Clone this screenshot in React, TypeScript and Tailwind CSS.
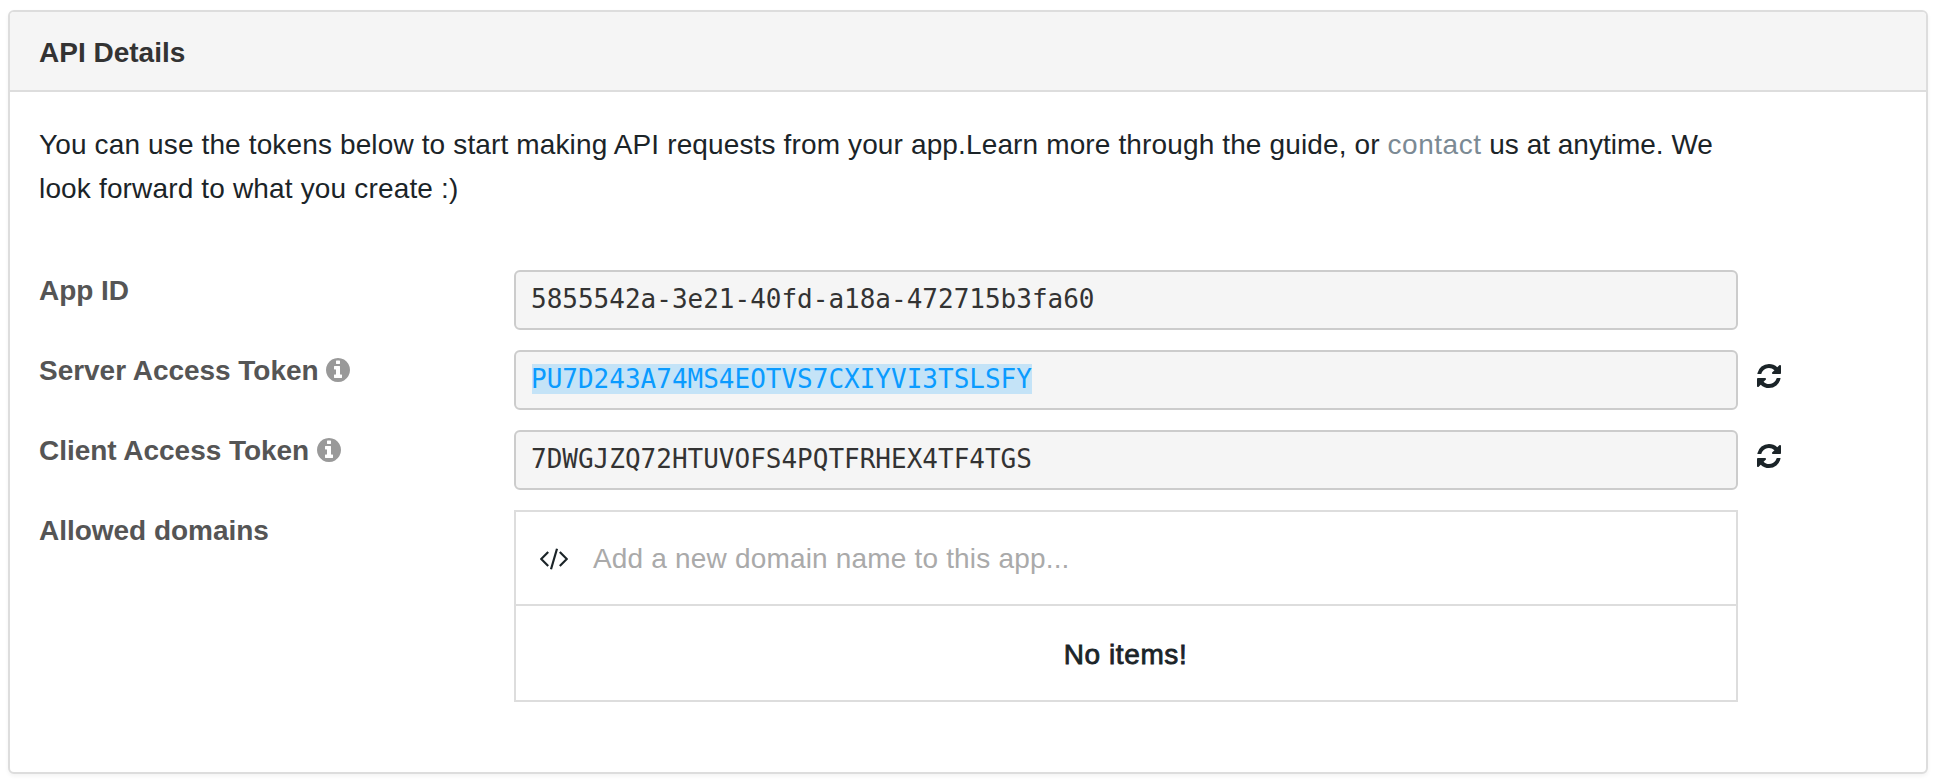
import type { ReactNode } from 'react';

function InfoIcon() {
  return (
    <svg viewBox="128 128 1536 1536" className="mb-0.5 h-6 w-6 shrink-0 fill-[#999999]">
      <path d="M1152 1376v-160q0-14-9-23t-23-9h-96v-512q0-14-9-23t-23-9h-320q-14 0-23 9t-9 23v160q0 14 9 23t23 9h96v320h-96q-14 0-23 9t-9 23v160q0 14 9 23t23 9h448q14 0 23-9t9-23zm-128-896v-160q0-14-9-23t-23-9h-192q-14 0-23 9t-9 23v160q0 14 9 23t23 9h192q14 0 23-9t9-23zm640 416q0 209-103 385.5t-279.5 279.5-385.5 103-385.5-103-279.5-279.5-103-385.5 103-385.5 279.5-279.5 385.5-103 385.5 103 279.5 279.5 103 385.5z" />
    </svg>
  );
}

function RefreshIcon() {
  return (
    <svg viewBox="128 128 1536 1536" className="h-6 w-6 fill-[#1b2428]">
      <path d="M1639 1056q0 5-1 7-64 268-268 434.5t-478 166.5q-146 0-282.5-55t-243.5-157l-129 129q-19 19-45 19t-45-19-19-45v-448q0-26 19-45t45-19h448q26 0 45 19t19 45-19 45l-137 137q71 66 161 102t187 36q134 0 250-65t186-179q11-17 53-117 8-23 30-23h192q13 0 22.5 9.5t9.5 22.5zm25-800v448q0 26-19 45t-45 19h-448q-26 0-45-19t-19-45 19-45l138-138q-148-137-349-137-134 0-250 65t-186 179q-11 17-53 117-8 23-30 23h-199q-13 0-22.5-9.5t-9.5-22.5v-7q65-268 270-434.5t480-166.5q146 0 284 55.5t245 156.5l130-129q19-19 45-19t45 19 19 45z" />
    </svg>
  );
}

function CodeIcon() {
  return (
    <svg viewBox="0 0 28 22" className="mt-0.5 h-[22px] w-7 shrink-0" fill="none" stroke="#1b2428" strokeWidth="2.2">
      <path d="M8.2 4 1.2 11l7 7M19.8 4l7 7-7 7M17 .7 11 21.3" />
    </svg>
  );
}

function Row({ label, children }: { label: ReactNode; children: ReactNode }) {
  return (
    <div className="flex items-start">
      <div className="-mt-px flex h-11 w-[475px] shrink-0 items-center font-bold leading-[44px] tracking-[-0.03px] text-[#555555]">
        {label}
      </div>
      {children}
    </div>
  );
}

function Field({ children }: { children: ReactNode }) {
  return (
    <div className="flex h-[60px] w-[1224px] items-start rounded-md border-2 border-[#cccccc] bg-[#f5f5f5] pl-[15px] pt-3 font-['DejaVu_Sans_Mono',monospace] text-[26px] leading-[30px] text-[#333333]">
      {children}
    </div>
  );
}

function RefreshButton() {
  return (
    <button className="ml-[19px] mt-3.5">
      <RefreshIcon />
    </button>
  );
}

export default function App() {
  return (
    <main className="h-[784px] w-[1938px] bg-white pl-2 pt-2.5 font-['Liberation_Sans',Arial,sans-serif] text-[28px] text-[#1b2428]">
      <section className="h-[764px] w-[1920px] rounded-md border-2 border-[#dddddd] bg-white shadow-[0_2px_4px_rgba(0,0,0,0.05)]">
        <header className="h-20 rounded-t border-b-2 border-[#dddddd] bg-[#f5f5f5] pl-[29px] pt-[19px]">
          <h1 className="font-bold leading-[44px] text-[#333333]">API Details</h1>
        </header>
        <div className="pl-[29px] pt-[31px]">
          <p className="whitespace-nowrap leading-[44px] tracking-[0.135px]">
            <span>You can use the tokens below to start making API requests from your app.Learn more through the guide, or </span>
            <a className="tracking-[0.52px] text-[#7b8a94]">contact</a>
            <span className="tracking-[0px]"> us at anytime. We</span>
            <br />
            <span className="tracking-[0.16px]">look forward to what you create :)</span>
          </p>
          <div className="mt-[59px] flex flex-col gap-5">
            <Row label="App ID">
              <Field>5855542a-3e21-40fd-a18a-472715b3fa60</Field>
            </Row>
            <Row
              label={
                <>
                  <span className="mr-[7px]">Server Access Token</span>
                  <InfoIcon />
                </>
              }
            >
              <Field>
                <span className="ml-px h-[30px] w-[500px] bg-[#c4e3f7] -indent-px text-[#0a9bff]">
                  PU7D243A74MS4EOTVS7CXIYVI3TSLSFY
                </span>
              </Field>
              <RefreshButton />
            </Row>
            <Row
              label={
                <>
                  <span className="mr-2">Client Access Token</span>
                  <InfoIcon />
                </>
              }
            >
              <Field>7DWGJZQ72HTUVOFS4PQTFRHEX4TF4TGS</Field>
              <RefreshButton />
            </Row>
            <Row label="Allowed domains">
              <div className="h-48 w-[1224px] border-2 border-[#dddddd]">
                <div className="flex h-[94px] items-center border-b-2 border-[#dddddd] pl-6">
                  <CodeIcon />
                  <span className="ml-[25px] mt-0.5 leading-[44px] tracking-[0.18px] text-[#aaaaaa]">
                    Add a new domain name to this app...
                  </span>
                </div>
                <div className="flex h-[94px] items-center justify-center pr-px pt-1 leading-[44px] tracking-[0.6px] [-webkit-text-stroke:0.8px_#1b2428]">
                  No items!
                </div>
              </div>
            </Row>
          </div>
        </div>
      </section>
    </main>
  );
}
